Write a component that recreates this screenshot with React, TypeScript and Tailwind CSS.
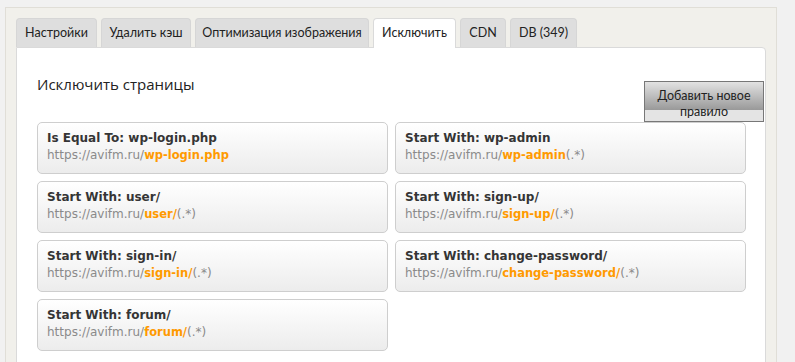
const tabs = [
  { label: 'Настройки', w: 'w-[81px]' },
  { label: 'Удалить кэш', w: 'w-[90px]' },
  { label: 'Оптимизация изображения', w: 'w-[174px]' },
  { label: 'Исключить', w: 'w-[83px]', active: true },
  { label: 'CDN', w: 'w-[46px]' },
  { label: 'DB (349)', w: 'w-[67px]' },
];

const rules = [
  { type: 'Is Equal To', value: 'wp-login.php', tail: '' },
  { type: 'Start With', value: 'wp-admin', tail: '(.*)' },
  { type: 'Start With', value: 'user/', tail: '(.*)' },
  { type: 'Start With', value: 'sign-up/', tail: '(.*)' },
  { type: 'Start With', value: 'sign-in/', tail: '(.*)' },
  { type: 'Start With', value: 'change-password/', tail: '(.*)' },
  { type: 'Start With', value: 'forum/', tail: '(.*)' },
];

const App = (): JSX.Element => {
  return (
    <div className="h-[362px] overflow-hidden bg-[#f1f1f1] pl-[5px] pt-[7px]">
      <div className="h-[400px] w-[772px] border border-[#e0ded7] bg-[#f1f0eb] px-[10px] pt-[10px]">
        <div className="flex gap-[4px]">
          {tabs.map(tab => (
            <div
              key={tab.label}
              className={
                tab.active
                  ? `relative z-10 -mb-px flex h-[30px] items-center justify-center rounded-t-[4px] border border-b-0 border-[#dadada] bg-white font-['Lato',sans-serif] text-[12.5px] text-[#222] ${tab.w}`
                  : `flex h-[29px] items-center justify-center rounded-t-[4px] border border-b-0 border-[#d6d6d6] bg-[#dedede] font-['Lato',sans-serif] text-[12.5px] text-[#222] ${tab.w}`
              }
            >
              {tab.label}
            </div>
          ))}
        </div>

        <div className="h-[340px] w-[750px] rounded-tr-[4px] border border-[#dadada] bg-white pl-[20px] pr-[1px] pt-[26px]">
          <div className="flex items-start justify-between">
            <h2 className="font-['Open_Sans',sans-serif] text-[15px] leading-[20px] text-[#222]">Исключить страницы</h2>
            <button className="mt-[7px] h-[41px] w-[120px] border border-[#777] bg-[#e4e4e4] bg-[linear-gradient(to_bottom,#e2e2e2,#999)] bg-[length:100%_28px] bg-no-repeat pt-[4px] font-['Lato',sans-serif] text-[12.5px] leading-[16px] text-[#222]">
              Добавить новое правило
            </button>
          </div>

          <div className="grid w-[709px] grid-cols-2 gap-x-[7px] gap-y-[7px]">
            {rules.map(rule => (
              <div
                key={rule.value}
                className="h-[52px] rounded-[5px] border border-[#cecece] bg-[linear-gradient(to_bottom,#ffffff,#ececec)] px-[9px] pt-[6px] font-['DejaVu_Sans',sans-serif]"
              >
                <div className="text-[12px] font-bold leading-[18px] text-[#353535]">
                  {rule.type}: {rule.value}
                </div>
                <div className="text-[12px] leading-[17px] text-[#8a8a8a]">
                  https://avifm.ru/<span className="text-[11.5px] font-bold text-[#ff9a00]">{rule.value}</span>
                  {rule.tail}
                </div>
              </div>
            ))}
          </div>
        </div>
      </div>
    </div>
  );
};

export default App;
